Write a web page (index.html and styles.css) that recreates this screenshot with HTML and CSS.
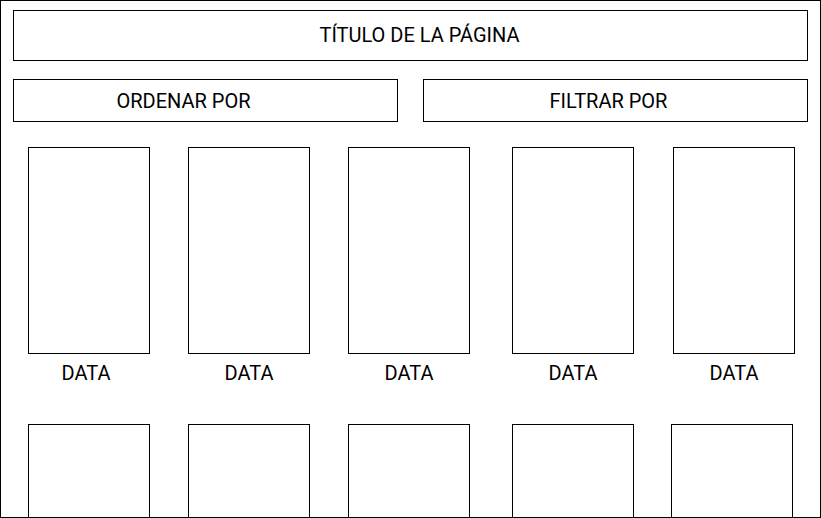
FILE: index.html
```html
<!DOCTYPE html>
<html lang="es">
<head>
    <meta charset="UTF-8">
    <meta name="viewport" content="width=device-width, initial-scale=1.0">
    <title>Título de la página</title>
    <link rel="stylesheet" href="styles.css">
</head>
<body>

    <div class="frame">
        <!-- Header -->
        <div class="page-title">TÍTULO DE LA PÁGINA</div>

        <!-- Sort / filter -->
        <div class="toolbar">
            <div class="tool tool-sort">ORDENAR POR</div>
            <div class="tool tool-filter">FILTRAR POR</div>
        </div>

        <!-- Items -->
        <div class="grid">
            <div class="item"><div class="thumb"></div><p class="label">DATA</p></div>
            <div class="item"><div class="thumb"></div><p class="label">DATA</p></div>
            <div class="item"><div class="thumb"></div><p class="label">DATA</p></div>
            <div class="item"><div class="thumb"></div><p class="label">DATA</p></div>
            <div class="item"><div class="thumb"></div><p class="label">DATA</p></div>
            <div class="item"><div class="thumb"></div></div>
            <div class="item"><div class="thumb"></div></div>
            <div class="item"><div class="thumb"></div></div>
            <div class="item"><div class="thumb"></div></div>
            <div class="item last"><div class="thumb"></div></div>
        </div>
    </div>

</body>
</html>
```

FILE: styles.css
```css
* {
    box-sizing: border-box;
}

body {
    margin: 0;
    font-family: Roboto, "Liberation Sans", Arial, sans-serif;
    font-size: 20px;
    color: #000;
    background: #fff;
}

/* Outer wireframe border */
.frame {
    width: 821px;
    height: 518px;
    border: 1px solid #000;
    padding: 9px 12px 0;
    overflow: hidden;
}

.page-title {
    height: 51px;
    border: 1px solid #000;
    display: flex;
    align-items: center;
    justify-content: center;
    padding: 0 0 2px 18px;
    margin-bottom: 18px;
}

.toolbar {
    display: flex;
    gap: 25px;
    margin-bottom: 25px;
}

.tool {
    width: 385px;
    height: 43px;
    border: 1px solid #000;
    display: flex;
    align-items: center;
    justify-content: center;
}

.tool-sort {
    padding-right: 44px;
}

.tool-filter {
    padding-right: 14px;
}

/* Card grid */
.grid {
    display: grid;
    grid-template-columns: repeat(5, 122px);
    column-gap: 38px;
    row-gap: 40px;
    margin-left: 15px;
}

.item {
    width: 122px;
}

.item:nth-child(5n+4) {
    margin-left: 4px;
}

.item:nth-child(5n) {
    margin-left: 5px;
}

.item.last {
    margin-left: 3px;
}

.thumb {
    height: 207px;
    border: 1px solid #000;
}

.label {
    margin: 8px 0 0;
    line-height: 22px;
    text-align: center;
}

.item:first-child .label {
    padding-right: 6px;
}
```
